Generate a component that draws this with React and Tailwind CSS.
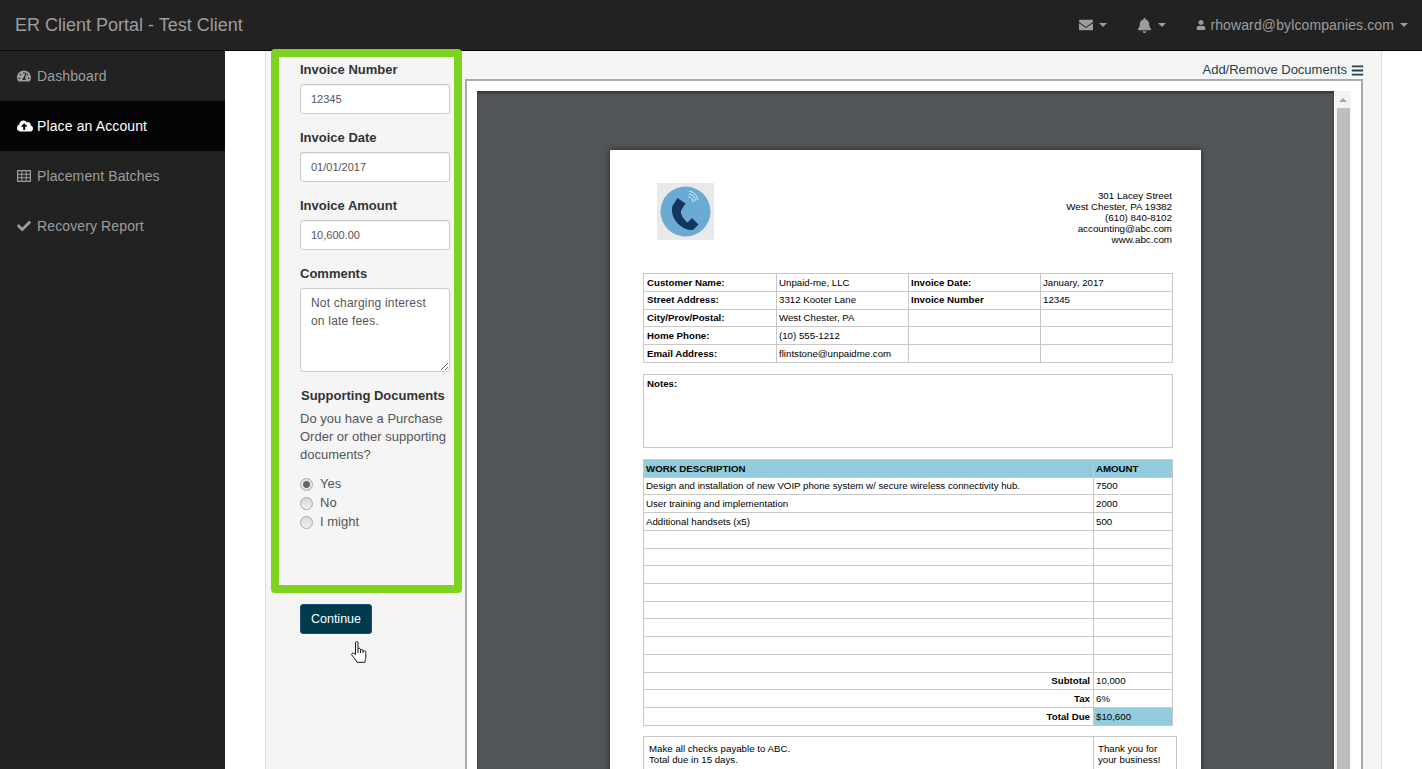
import React from "react";
import { FaTachometerAlt, FaCloudUploadAlt, FaCheck, FaEnvelope, FaBell, FaUser, FaBars } from "react-icons/fa";

const Caret = () => <span className="ml-[6px] inline-block w-0 h-0 border-x-[4px] border-x-transparent border-t-[4px] border-t-[#9d9d9d] align-middle" />;

const TableIcon = () => (
  <svg width="14" height="12" viewBox="0 0 14 12" fill="none" stroke="currentColor" strokeWidth="1.1">
    <rect x="0.6" y="0.6" width="12.8" height="10.8" strokeWidth="1.3" />
    <path d="M0.6 4.2H13.4M0.6 7.8H13.4M4.8 0.6V11.4M9.2 0.6V11.4" />
  </svg>
);

function NavItem({ icon, label, active }) {
  return (
    <div className={`h-[50px] flex items-center pl-[17px] text-[14px] tracking-[0.12px] ${active ? "bg-[#050505] text-white" : "text-[#9d9d9d]"}`}>
      <span className="w-[20px] flex items-center text-[14px]">{icon}</span>
      {label}
    </div>
  );
}

function Field({ label, value }) {
  return (
    <div className="mb-[13px]">
      <div className="h-[20px] leading-[22px] mb-[5px] font-bold text-[13px] text-[#333]">{label}</div>
      <input readOnly value={value} className="block w-[150px] h-[30px] px-[10px] text-[11px] text-[#555] bg-white border border-[#ccc] rounded-[3px] shadow-[inset_0_1px_1px_rgba(0,0,0,0.075)] outline-none" />
    </div>
  );
}

function Radio({ label, checked }) {
  return (
    <label className="h-[19px] flex items-center text-[13px] text-[#555]">
      <input type="radio" readOnly checked={!!checked} className={`appearance-none w-[13px] h-[13px] rounded-full border border-[#a9a9a9] mr-[7px] mt-[2px] ${checked ? "bg-[radial-gradient(circle,#666_0,#666_3px,#e6e6e6_4px)]" : "bg-gradient-to-b from-[#d8d8d8] to-[#f0f0f0]"}`} />
      {label}
    </label>
  );
}

function Logo() {
  return (
    <div className="w-[57px] h-[57px] bg-[#e9e9e9] flex items-center justify-center">
      <svg width="57" height="57" viewBox="0 0 57 57">
        <circle cx="28.5" cy="28.5" r="25" fill="#6aaad4" />
        <path d="M20.5 15 L28.5 20.5 L24 27.5 C23 31 27 37 30.5 39.5 L35 35 L41.5 41.5 L36 47 C24 48 12 34 15.5 23 Z" fill="#12375f" />
        <path d="M31.5 14 a5 5 0 0 1 4.5 5 M32 11 a8 8 0 0 1 6.5 7 M32 8 a11 11 0 0 1 9 9.5" fill="none" stroke="#dcedf7" strokeWidth="1" />
      </svg>
    </div>
  );
}

const Hand = () => (
  <svg width="16" height="22" viewBox="0 0 16 22" fill="#fff" stroke="#000" strokeWidth="0.9">
    <path d="M4.5 1.5 C4.5 0.2,7 0.2,7 1.5 V8 C7 7,9.5 7,9.5 8.5 V9.5 C9.5 8.3,12 8.3,12 10 V10.5 C12 9.4,14.8 9.4,14.8 11.5 V16 C14.8 18,14.2 19,13.8 21.3 H6 C5 19,2.5 16.5,1 14.2 C0 12.4,2 11,4.5 13.5 Z" />
    <path d="M7 8 V12 M9.5 9.5 V12 M12 10.5 V12" fill="none" />
  </svg>
);

const cell = "border border-[#c8c8c8] pt-[1px] pb-0 align-middle overflow-hidden whitespace-nowrap";

function CustomerTable() {
  const rows = [
    ["Customer Name:", "Unpaid-me, LLC", "Invoice Date:", "January, 2017"],
    ["Street Address:", "3312 Kooter Lane", "Invoice Number", "12345"],
    ["City/Prov/Postal:", "West Chester, PA", "", ""],
    ["Home Phone:", "(10) 555-1212", "", ""],
    ["Email Address:", "flintstone@unpaidme.com", "", ""],
  ];
  return (
    <table className="w-[529px] table-fixed border-collapse text-[9.7px] text-black">
      <tbody>
        {rows.map((r) => (
          <tr key={r[0]} className="h-[17.8px]">
            <td className={`${cell} px-[3px] w-[133px] font-bold`}>{r[0]}</td>
            <td className={`${cell} px-[2px] w-[132px]`}>{r[1]}</td>
            <td className={`${cell} px-[2px] w-[132px] font-bold`}>{r[2]}</td>
            <td className={`${cell} px-[2px] w-[132px]`}>{r[3]}</td>
          </tr>
        ))}
      </tbody>
    </table>
  );
}

function WorkTable() {
  const rows = [
    ["Design and installation of new VOIP phone system w/ secure wireless connectivity hub.", "7500"],
    ["User training and implementation", "2000"],
    ["Additional handsets (x5)", "500"],
    ...Array.from({ length: 8 }, () => ["", ""]),
  ];
  return (
    <table className="w-[529px] table-fixed border-collapse text-[9.7px] text-black">
      <tbody>
        <tr className="h-[17.73px] bg-[#92ccdc] font-bold">
          <td className={`${cell} px-[2px] w-[450px] border-[#a8c4cc]`}>WORK DESCRIPTION</td>
          <td className={`${cell} px-[2px] w-[79px] border-[#a8c4cc]`}>AMOUNT</td>
        </tr>
        {rows.map((r, i) => (
          <tr key={i} className="h-[17.73px]">
            <td className={`${cell} px-[2px]`}>{r[0]}</td>
            <td className={`${cell} px-[2px]`}>{r[1]}</td>
          </tr>
        ))}
        {[["Subtotal", "10,000"], ["Tax", "6%"]].map((r) => (
          <tr key={r[0]} className="h-[17.73px]">
            <td className={`${cell} px-[3px] text-right font-bold`}>{r[0]}</td>
            <td className={`${cell} px-[2px]`}>{r[1]}</td>
          </tr>
        ))}
        <tr className="h-[17.73px]">
          <td className={`${cell} px-[3px] text-right font-bold`}>Total Due</td>
          <td className={`${cell} px-[2px] bg-[#92ccdc]`}>$10,600</td>
        </tr>
      </tbody>
    </table>
  );
}

function InvoicePage() {
  return (
    <div className="w-[591px] h-[700px] mx-auto bg-white shadow-[0_0_6px_rgba(0,0,0,0.6)] pt-[33px] pl-[33px] text-black shrink-0">
      <div className="flex justify-between h-[90px] pr-[29px]">
        <div className="ml-[14px]"><Logo /></div>
        <div className="text-right text-[9.8px] leading-[11px] pt-[7px]">
          <div>301 Lacey Street</div>
          <div>West Chester, PA 19382</div>
          <div>(610) 840-8102</div>
          <div>accounting@abc.com</div>
          <div>www.abc.com</div>
        </div>
      </div>
      <CustomerTable />
      <div className="w-[530px] h-[74px] mt-[11px] mb-[11px] border border-[#c8c8c8] px-[3px] py-[2px] text-[9.7px] font-bold">Notes:</div>
      <WorkTable />
      <div className="w-[534px] mt-[10px] border border-[#c8c8c8] flex text-[9.7px] leading-[11px] h-[60px]">
        <div className="w-[450px] border-r border-[#c8c8c8] pl-[5px] pt-[6px]">
          <div>Make all checks payable to ABC.</div>
          <div>Total due in 15 days.</div>
        </div>
        <div className="pl-[4px] pt-[6px]">
          <div>Thank you for</div>
          <div>your business!</div>
        </div>
      </div>
    </div>
  );
}

export default function App() {
  return (
    <div className="h-screen flex flex-col overflow-hidden bg-white font-['Liberation_Sans',Arial,sans-serif]">
      <header className="relative z-0 h-[51px] shrink-0 bg-[#222] border-b border-[#080808] flex items-center text-[#9d9d9d]">
        <div className="pl-[15px] text-[18px]">ER Client Portal - Test Client</div>
        <div className="ml-auto flex items-center text-[14px] pr-[14px] tracking-[0.12px]">
          <span className="flex items-center"><FaEnvelope className="text-[14px]" /><Caret /></span>
          <span className="flex items-center ml-[30px]"><FaBell className="text-[15px]" /><Caret /></span>
          <span className="flex items-center ml-[30px]"><FaUser className="text-[10px] mr-[4px]" />rhoward@bylcompanies.com<Caret /></span>
        </div>
      </header>
      <div className="flex flex-1 min-h-0">
        <aside className="w-[225px] shrink-0 bg-[#222]">
          <NavItem icon={<FaTachometerAlt />} label="Dashboard" />
          <NavItem active icon={<FaCloudUploadAlt className="text-[16px]" />} label="Place an Account" />
          <NavItem icon={<TableIcon />} label="Placement Batches" />
          <NavItem icon={<FaCheck />} label="Recovery Report" />
        </aside>
        <main className="flex-1 min-w-0 px-[40px]">
          <div className="h-full w-[1117px] bg-[#f5f5f5] border-x border-[#ddd] flex">
            <div className="relative w-[199px] shrink-0 pl-[5px] -mt-[2px]">
              <div className="relative z-10 w-[191px] h-[544px] border-[8px] border-[#7ed321] rounded-[4px] pl-[21px] pr-[4px] pt-[2px]">
                <Field label="Invoice Number" value="12345" />
                <Field label="Invoice Date" value="01/01/2017" />
                <Field label="Invoice Amount" value="10,600.00" />
                <div className="mb-[13px]">
                  <div className="h-[20px] leading-[22px] mb-[5px] font-bold text-[13px] text-[#333]">Comments</div>
                  <textarea readOnly value={"Not charging interest\non late fees."} className="block w-[150px] h-[84px] px-[10px] py-[5px] text-[12px] tracking-[0.2px] leading-[18px] text-[#555] bg-white border border-[#ccc] rounded-[3px] outline-none" />
                </div>
                <div className="h-[20px] leading-[22px] pl-[1px] font-bold text-[13px] text-[#333]">Supporting Documents</div>
                <p className="mt-[5px] text-[13px] leading-[18px] text-[#555]">Do you have a Purchase Order or other supporting documents?</p>
                <div className="mt-[10px]">
                  <Radio label="Yes" checked />
                  <Radio label="No" />
                  <Radio label="I might" />
                </div>
              </div>
              <button className="block ml-[29px] mt-[11px] w-[72px] h-[30px] bg-[#003a4f] border border-[#1d5068] rounded-[3px] text-white text-[12.5px]">Continue</button>
              <div className="absolute left-[85px] top-[592px] z-20">
                <Hand />
              </div>
            </div>
            <div className="w-[898px] shrink-0 flex flex-col min-h-0">
              <div className="h-[28px] shrink-0 flex items-center justify-end text-[13px] text-[#23434f] pt-[10px] leading-[20px]">
                Add/Remove Documents<FaBars className="ml-[4px] -mr-[1px] text-[13px]" />
              </div>
              <div className="flex-1 min-h-0 border-x-2 border-t-2 border-[#aaa] bg-white pl-[10px] pr-[10px] pt-[10px]">
                <div className="h-full flex">
                  <div className="w-[857px] h-full bg-[#525659] pt-[59px] shadow-[inset_0_2px_3px_rgba(0,0,0,0.4)] overflow-hidden">
                    <InvoicePage />
                  </div>
                  <div className="w-[16px] ml-[1px] h-full bg-[#f3f3f3] flex flex-col items-center">
                    <div className="h-[17px] shrink-0 flex items-center justify-center">
                      <span className="w-0 h-0 border-x-[4px] border-x-transparent border-b-[4px] border-b-[#a5a5a5]" />
                    </div>
                    <div className="w-[13px] flex-1 bg-[#bdbdbd]" />
                  </div>
                </div>
              </div>
            </div>
          </div>
        </main>
      </div>
    </div>
  );
}
